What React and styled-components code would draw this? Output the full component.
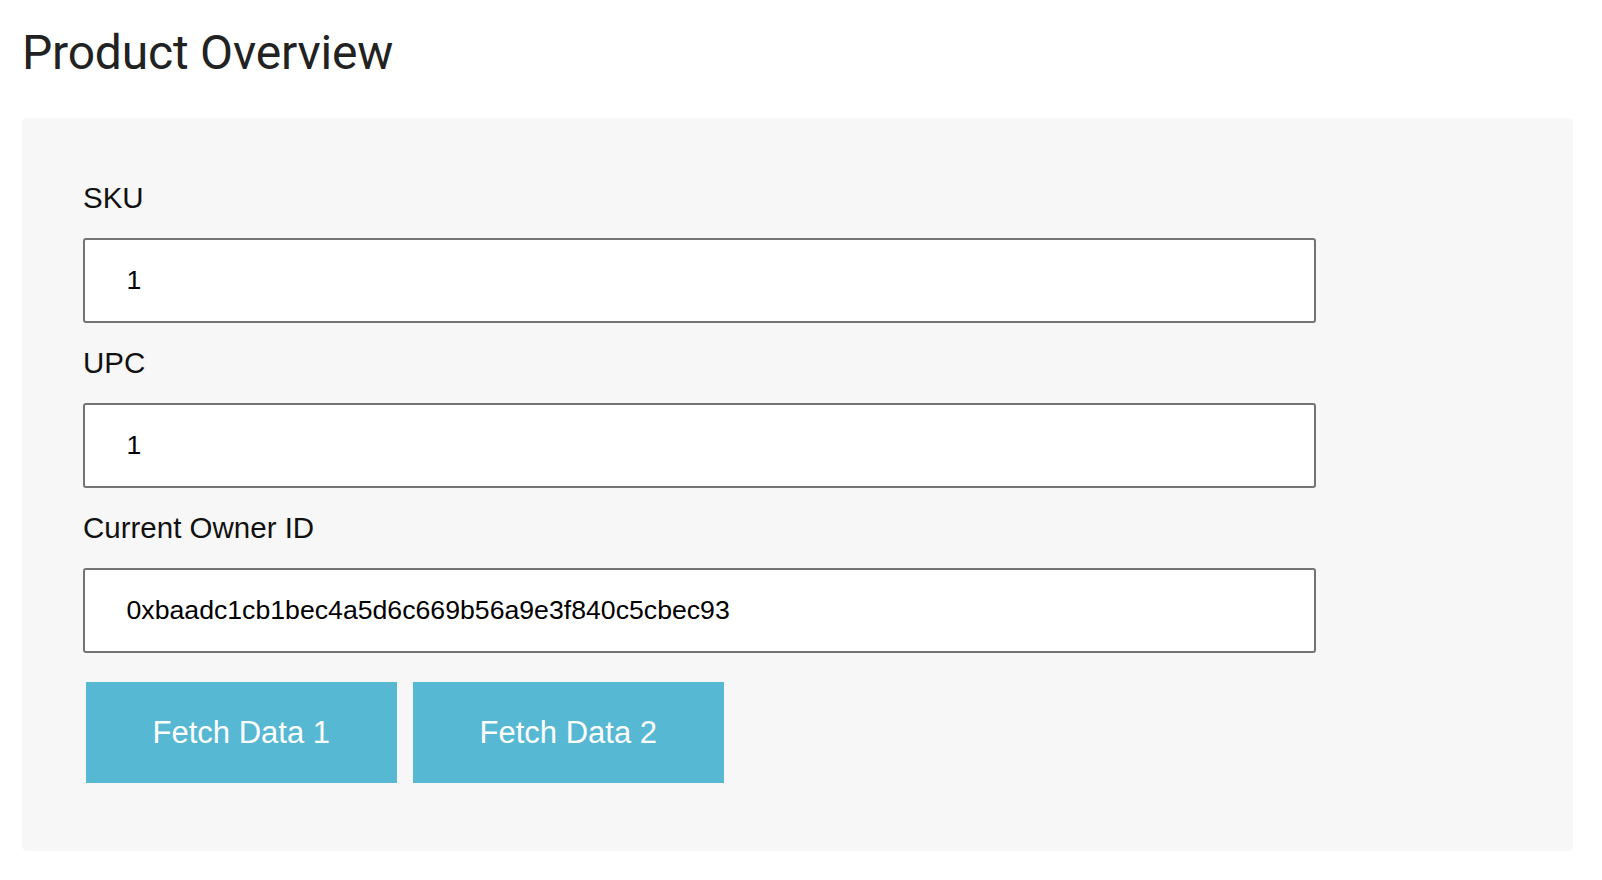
import React from "react";
import styled, { createGlobalStyle } from "styled-components";

const Global = createGlobalStyle`
  html, body { margin: 0; padding: 0; background: #ffffff; }
  body { font-family: "Liberation Sans", Arial, sans-serif; }
  * { box-sizing: border-box; }
`;

const Page = styled.div`
  padding: 25px 29px 30px 22px;
`;

const Title = styled.h1`
  margin: 0 0 37px 0;
  font-family: Roboto, "Liberation Sans", sans-serif;
  font-weight: 400;
  font-size: 48px;
  line-height: 56px;
  color: #222222;
  letter-spacing: -0.2px;
`;

const Panel = styled.section`
  background: #f7f7f7;
  border-radius: 5px;
  padding: 63px 60px 67.5px 61px;
`;

const Field = styled.div`
  display: flex;
  flex-direction: column;
  margin-bottom: ${(p) => (p.$last ? "0" : "23.5px")};
  width: 1233px;
`;

const Label = styled.label`
  font-family: "Liberation Sans", Arial, sans-serif;
  font-size: 29.5px;
  line-height: 34.5px;
  color: #111111;
  margin-bottom: 22px;
`;

const Input = styled.input`
  height: 85px;
  width: 100%;
  border: 2px solid #747474;
  border-radius: 3px;
  background: #ffffff;
  padding: 0 0 0 41.5px;
  font-family: "Liberation Sans", Arial, sans-serif;
  font-size: 26.67px;
  color: #000000;
  outline: none;
`;

const Actions = styled.div`
  display: flex;
  gap: 16.5px;
  padding-left: 3px;
  margin-top: 29.5px;
`;

const Button = styled.button`
  width: 310.5px;
  height: 101px;
  border: none;
  border-radius: 0;
  background: #56b8d2;
  color: #ffffff;
  font-family: "Liberation Sans", Arial, sans-serif;
  font-size: 31px;
  cursor: pointer;
`;

const fields = [
  { label: "SKU", value: "1" },
  { label: "UPC", value: "1" },
  { label: "Current Owner ID", value: "0xbaadc1cb1bec4a5d6c669b56a9e3f840c5cbec93" },
];

export default function App() {
  return (
    <Page>
      <Global />
      <Title>Product Overview</Title>
      <Panel>
        {fields.map((f, i) => (
          <Field key={i} $last={i === fields.length - 1}>
            <Label>{f.label}</Label>
            <Input defaultValue={f.value} readOnly />
          </Field>
        ))}
        <Actions>
          <Button>Fetch Data 1</Button>
          <Button>Fetch Data 2</Button>
        </Actions>
      </Panel>
    </Page>
  );
}
